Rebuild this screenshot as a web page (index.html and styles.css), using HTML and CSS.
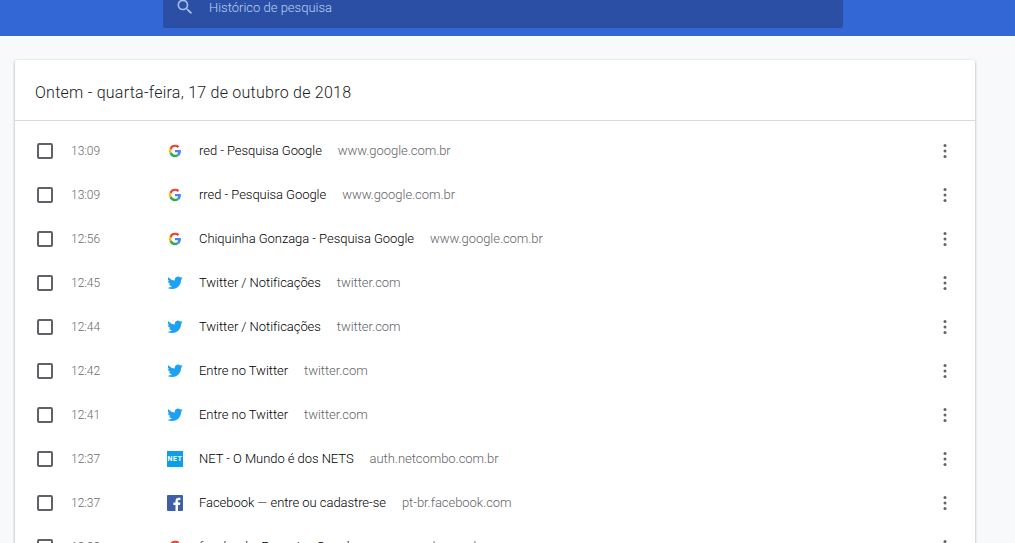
FILE: index.html
```html
<!DOCTYPE html>
<html lang="pt-BR">
<head>
    <meta charset="UTF-8">
    <meta name="viewport" content="width=device-width, initial-scale=1.0">
    <title>Histórico</title>
    <link rel="stylesheet" href="styles.css">
</head>
<body>
    <svg class="icon-defs" width="0" height="0">
        <defs>
            <symbol id="icon-google" viewBox="-1.5 -1.5 19 19">
                <path fill="#ea4335" d="M8 3.100c1.300 0 2.300.5 3.100 1.200l2-2A7.200 7.200 0 0 0 8 .7 7.300 7.300 0 0 0 1.500 4.700l2.400 1.800A4.400 4.400 0 0 1 8 3.100z"/>
                <path fill="#4285f4" d="M15 8.200c0-.6 0-1-.2-1.500H8v2.800h3.900c-.2 1-.7 1.700-1.500 2.300l2.300 1.800c1.400-1.300 2.300-3.200 2.300-5.400z"/>
                <path fill="#fbbc05" d="M3.900 9.500A4.400 4.400 0 0 1 3.900 6.500L1.500 4.700a7.300 7.300 0 0 0 0 6.600l2.400-1.800z"/>
                <path fill="#34a853" d="M8 15.300c2 0 3.600-.6 4.700-1.700l-2.300-1.800c-.6.4-1.400.7-2.400.7a4.400 4.400 0 0 1-4.100-3L1.500 11.300A7.300 7.300 0 0 0 8 15.300z"/>
            </symbol>
            <symbol id="icon-twitter" viewBox="0 0 24 24">
                <path fill="#1da1f2" d="M23.500 4.600c-.85.380-1.760.630-2.710.750a4.730 4.730 0 0 0 2.080-2.610c-.91.540-1.920.930-3 1.150a4.720 4.720 0 0 0-8.040 4.300A13.400 13.400 0 0 1 2.100 3.260a4.720 4.720 0 0 0 1.460 6.300 4.700 4.700 0 0 1-2.140-.59v.06a4.720 4.720 0 0 0 3.790 4.630 4.700 4.700 0 0 1-2.130.08 4.730 4.730 0 0 0 4.410 3.280A9.480 9.480 0 0 1 .5 18.980 13.370 13.370 0 0 0 7.730 21.100c8.680 0 13.430-7.190 13.430-13.430l-.02-.61c.92-.66 1.720-1.500 2.360-2.460z"/>
            </symbol>
            <symbol id="icon-facebook" viewBox="0 0 16 16">
                <rect width="16" height="16" rx="1" fill="#3f5ea8"/>
                <path fill="#fff" d="M11 16v-6h2l.3-2.400H11V6.100c0-.7.200-1.200 1.200-1.200h1.200V2.800c-.2 0-.9-.1-1.800-.1-1.800 0-3.100 1.100-3.100 3.100v1.800H6.400V10h2.100v6z"/>
            </symbol>
            <symbol id="icon-more" viewBox="0 0 4 16">
                <circle cx="2" cy="2.500" r="1.500"/>
                <circle cx="2" cy="8" r="1.500"/>
                <circle cx="2" cy="13.500" r="1.500"/>
            </symbol>
        </defs>
    </svg>

    <header class="toolbar">
        <div class="search-box">
            <svg class="search-icon" viewBox="0 0 24 24" width="20" height="20">
                <path fill="#a9c0ee" d="M15.500 14h-.79l-.28-.27A6.470 6.470 0 0 0 16 9.500 6.500 6.500 0 1 0 9.500 16c1.610 0 3.090-.59 4.230-1.570l.27.28v.79l5 4.990L20.490 19l-4.990-5zm-6 0a4.500 4.500 0 1 1 0-9 4.500 4.500 0 0 1 0 9z"/>
            </svg>
            <span class="search-label">Histórico de pesquisa</span>
        </div>
    </header>

    <main class="history-card">
        <h2 class="card-title">Ontem - quarta-feira, 17 de outubro de 2018</h2>
        <div class="history-list">
            <div class="history-row">
                <span class="check"></span><span class="time">13:09</span>
                <svg class="favicon"><use href="#icon-google"/></svg>
                <span class="page-title">red - Pesquisa Google</span><span class="domain">www.google.com.br</span>
                <svg class="more"><use href="#icon-more"/></svg>
            </div>
            <div class="history-row">
                <span class="check"></span><span class="time">13:09</span>
                <svg class="favicon"><use href="#icon-google"/></svg>
                <span class="page-title">rred - Pesquisa Google</span><span class="domain">www.google.com.br</span>
                <svg class="more"><use href="#icon-more"/></svg>
            </div>
            <div class="history-row">
                <span class="check"></span><span class="time">12:56</span>
                <svg class="favicon"><use href="#icon-google"/></svg>
                <span class="page-title">Chiquinha Gonzaga - Pesquisa Google</span><span class="domain">www.google.com.br</span>
                <svg class="more"><use href="#icon-more"/></svg>
            </div>
            <div class="history-row">
                <span class="check"></span><span class="time">12:45</span>
                <svg class="favicon"><use href="#icon-twitter"/></svg>
                <span class="page-title">Twitter / Notificações</span><span class="domain">twitter.com</span>
                <svg class="more"><use href="#icon-more"/></svg>
            </div>
            <div class="history-row">
                <span class="check"></span><span class="time">12:44</span>
                <svg class="favicon"><use href="#icon-twitter"/></svg>
                <span class="page-title">Twitter / Notificações</span><span class="domain">twitter.com</span>
                <svg class="more"><use href="#icon-more"/></svg>
            </div>
            <div class="history-row">
                <span class="check"></span><span class="time">12:42</span>
                <svg class="favicon"><use href="#icon-twitter"/></svg>
                <span class="page-title">Entre no Twitter</span><span class="domain">twitter.com</span>
                <svg class="more"><use href="#icon-more"/></svg>
            </div>
            <div class="history-row">
                <span class="check"></span><span class="time">12:41</span>
                <svg class="favicon"><use href="#icon-twitter"/></svg>
                <span class="page-title">Entre no Twitter</span><span class="domain">twitter.com</span>
                <svg class="more"><use href="#icon-more"/></svg>
            </div>
            <div class="history-row">
                <span class="check"></span><span class="time">12:37</span>
                <span class="favicon net-icon">NET</span>
                <span class="page-title">NET - O Mundo é dos NETS</span><span class="domain">auth.netcombo.com.br</span>
                <svg class="more"><use href="#icon-more"/></svg>
            </div>
            <div class="history-row">
                <span class="check"></span><span class="time">12:37</span>
                <svg class="favicon"><use href="#icon-facebook"/></svg>
                <span class="page-title">Facebook — entre ou cadastre-se</span><span class="domain">pt-br.facebook.com</span>
                <svg class="more"><use href="#icon-more"/></svg>
            </div>
            <div class="history-row">
                <span class="check"></span><span class="time">12:33</span>
                <svg class="favicon"><use href="#icon-google"/></svg>
                <span class="page-title">facebook - Pesquisa Google</span><span class="domain">www.google.com.br</span>
                <svg class="more"><use href="#icon-more"/></svg>
            </div>
        </div>
    </main>
</body>
</html>
```

FILE: styles.css
```css
html, body {
    height: 543px;
    overflow: hidden;
}
body {
    font-family: Roboto, Arial, sans-serif;
    background-color: #f8f9fa;
    color: #212121;
    margin: 0;
    padding: 0;
}
.icon-defs {
    display: block;
    height: 0;
}
.toolbar {
    background-color: #3367d6;
    height: 36px;
    display: flex;
    padding-left: 163px;
}
.search-box {
    background-color: #2a4fa5;
    width: 680px;
    height: 28px;
    border-radius: 0 0 2px 2px;
    display: flex;
    align-items: flex-start;
    padding-left: 12px;
    box-sizing: border-box;
}
.search-icon {
    margin-top: -3px;
    flex: none;
}
.search-label {
    margin-left: 14px;
    color: #bcd0f2;
    font-size: 13px;
    font-weight: 300;
    line-height: 15px;
}
.history-card {
    background: #fff;
    width: 960px;
    margin: 24px 0 0 15px;
    border-radius: 2px;
    box-shadow: 0 1px 3px rgba(0, 0, 0, 0.35);
}
.card-title {
    margin: 0;
    height: 61px;
    box-sizing: border-box;
    padding: 4px 20px 0;
    display: flex;
    align-items: center;
    font-size: 16px;
    font-weight: 300;
    color: #212121;
    letter-spacing: 0.25px;
    border-bottom: 1px solid #dadada;
}
.history-list {
    padding-top: 8px;
}
.history-row {
    height: 44px;
    display: flex;
    align-items: center;
    padding-left: 22px;
    font-size: 13px;
}
.check {
    width: 16px;
    height: 16px;
    box-sizing: border-box;
    border: 2px solid #5f6368;
    border-radius: 2px;
    flex: none;
}
.time {
    width: 96px;
    margin-left: 18px;
    color: #6a6a6a;
    font-size: 12px;
    font-weight: 300;
    flex: none;
}
.favicon {
    width: 16px;
    height: 16px;
    flex: none;
    margin-right: 16px;
}
.net-icon {
    background: #0a9fe6;
    color: #fff;
    font-size: 7px;
    font-weight: 700;
    line-height: 16px;
    text-align: center;
    letter-spacing: 0.5px;
}
.page-title {
    font-weight: 300;
    color: #000;
    letter-spacing: -0.05px;
    padding-bottom: 2px;
}
.domain {
    margin-left: 16px;
    color: #5f6368;
    font-weight: 300;
    letter-spacing: -0.05px;
    padding-bottom: 2px;
}
.more {
    width: 4px;
    height: 16px;
    margin-left: auto;
    margin-right: 28px;
    fill: #5f6368;
    flex: none;
}
```
